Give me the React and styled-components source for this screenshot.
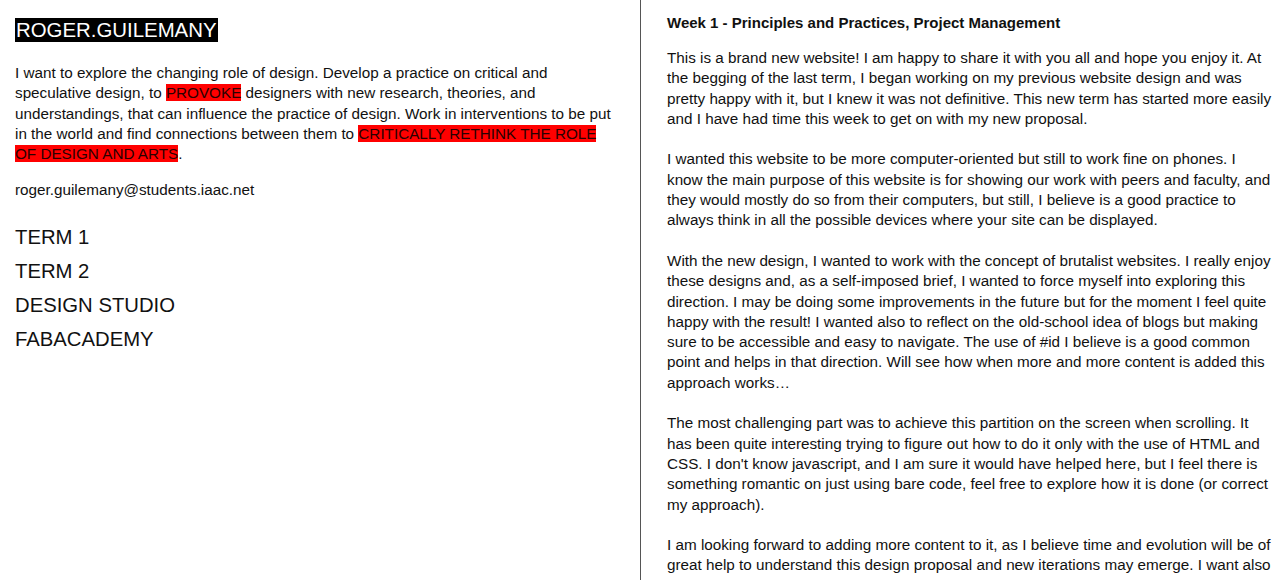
import styled, { createGlobalStyle } from "styled-components";

const GlobalStyle = createGlobalStyle`
  html, body {
    margin: 0;
    padding: 0;
    background: #ffffff;
  }
  body {
    font-family: "Liberation Sans", Arial, Helvetica, sans-serif;
    color: #000000;
  }
`;

const paragraphs = [
  "This is a brand new website! I am happy to share it with you all and hope you enjoy it. At the begging of the last term, I began working on my previous website design and was pretty happy with it, but I knew it was not definitive. This new term has started more easily and I have had time this week to get on with my new proposal.",
  "I wanted this website to be more computer-oriented but still to work fine on phones. I know the main purpose of this website is for showing our work with peers and faculty, and they would mostly do so from their computers, but still, I believe is a good practice to always think in all the possible devices where your site can be displayed.",
  "With the new design, I wanted to work with the concept of brutalist websites. I really enjoy these designs and, as a self-imposed brief, I wanted to force myself into exploring this direction. I may be doing some improvements in the future but for the moment I feel quite happy with the result! I wanted also to reflect on the old-school idea of blogs but making sure to be accessible and easy to navigate. The use of #id I believe is a good common point and helps in that direction. Will see how when more and more content is added this approach works…",
  "The most challenging part was to achieve this partition on the screen when scrolling. It has been quite interesting trying to figure out how to do it only with the use of HTML and CSS. I don't know javascript, and I am sure it would have helped here, but I feel there is something romantic on just using bare code, feel free to explore how it is done (or correct my approach).",
  "I am looking forward to adding more content to it, as I believe time and evolution will be of great help to understand this design proposal and new iterations may emerge. I want also to keep it simple and clean, so the content is what matters the most.",
];

const menu = ["TERM 1", "TERM 2", "DESIGN STUDIO", "FABACADEMY"];

export default function App() {
  return (
    <>
      <GlobalStyle />
      <Page>
        <Sidebar>
          <Title>
            <TitleMark>ROGER.GUILEMANY</TitleMark>
          </Title>
          <Intro>
            I want to explore the changing role of design. Develop a practice on
            critical and speculative design, to <Mark>PROVOKE</Mark> designers
            with new research, theories, and understandings, that can influence
            the practice of design. Work in interventions to be put in the world
            and find connections between them to{" "}
            <Mark>CRITICALLY RETHINK THE ROLE OF DESIGN AND ARTS</Mark>.
          </Intro>
          <Email>roger.guilemany@students.iaac.net</Email>
          <Menu>
            {menu.map((item) => (
              <MenuItem key={item}>
                <MenuLink href="#">{item}</MenuLink>
              </MenuItem>
            ))}
          </Menu>
        </Sidebar>
        <Content>
          <PostTitle>Week 1 - Principles and Practices, Project Management</PostTitle>
          {paragraphs.map((text, i) => (
            <PostText key={i}>{text}</PostText>
          ))}
        </Content>
      </Page>
    </>
  );
}

const Page = styled.div`
  display: grid;
  grid-template-columns: 640px 1fr;
  height: 580px;
  overflow: hidden;
`;

const Sidebar = styled.aside`
  padding: 18px 15px 0 15px;
`;

const Title = styled.h1`
  margin: 0;
  font-size: 20.4px;
  font-weight: 400;
  line-height: 24px;
`;

const TitleMark = styled.span`
  background: #000000;
  color: #ffffff;
  padding: 1px;
`;

const Intro = styled.p`
  margin: 21px 0 0 0;
  max-width: 602px;
  font-size: 15.25px;
  line-height: 20.3px;
  color: #111111;
`;

const Mark = styled.span`
  background: #ff0000;
  color: #2a0000;
`;

const Email = styled.p`
  margin: 16px 0 0 0;
  font-size: 15.25px;
  line-height: 20px;
  color: #111111;
`;

const Menu = styled.ul`
  list-style: none;
  margin: 20px 0 0 0;
  padding: 0;
`;

const MenuItem = styled.li`
  font-size: 20.3px;
  line-height: 34px;
`;

const MenuLink = styled.a`
  color: #111111;
  text-decoration: none;
`;

const Content = styled.main`
  border-left: 1px solid #555555;
  padding: 13px 8px 0 26px;
  overflow: hidden;
`;

const PostTitle = styled.h2`
  margin: 0;
  font-size: 15px;
  font-weight: 700;
  line-height: 20px;
  color: #111111;
`;

const PostText = styled.p`
  margin: 15px 0 20.3px 0;
  font-size: 15.25px;
  line-height: 20.3px;
  color: #111111;

  & + & {
    margin-top: 0;
  }
`;
